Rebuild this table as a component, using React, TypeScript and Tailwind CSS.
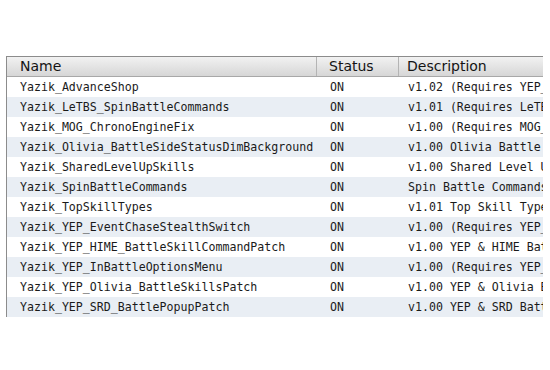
const rows = [
  ["Yazik_AdvanceShop", "ON", "v1.02 (Requires YEP_ShopMenuCore)"],
  ["Yazik_LeTBS_SpinBattleCommands", "ON", "v1.01 (Requires LeTBS)"],
  ["Yazik_MOG_ChronoEngineFix", "ON", "v1.00 (Requires MOG_ChronoEngine)"],
  ["Yazik_Olivia_BattleSideStatusDimBackground", "ON", "v1.00 Olivia Battle Side Status"],
  ["Yazik_SharedLevelUpSkills", "ON", "v1.00 Shared Level Up Skills"],
  ["Yazik_SpinBattleCommands", "ON", "Spin Battle Commands"],
  ["Yazik_TopSkillTypes", "ON", "v1.01 Top Skill Types"],
  ["Yazik_YEP_EventChaseStealthSwitch", "ON", "v1.00 (Requires YEP_EventChase)"],
  ["Yazik_YEP_HIME_BattleSkillCommandPatch", "ON", "v1.00 YEP & HIME Battle Skill"],
  ["Yazik_YEP_InBattleOptionsMenu", "ON", "v1.00 (Requires YEP_OptionsCore)"],
  ["Yazik_YEP_Olivia_BattleSkillsPatch", "ON", "v1.00 YEP & Olivia Battle Skills"],
  ["Yazik_YEP_SRD_BattlePopupPatch", "ON", "v1.00 YEP & SRD Battle Popup"],
];

const mono = "font-['DejaVu_Sans_Mono','Liberation_Mono',monospace] text-[11.6px] text-[#1a1a1a]";

export default function App() {
  return (
    <div className="w-[550px] h-[370px] bg-white overflow-hidden">
      <div className="ml-[6px] mt-[56px] w-[537px] overflow-hidden border-l border-t border-[#8c8c8c]">
        {/* header */}
        <div className="flex h-[20px] bg-gradient-to-b from-[#f2f2f2] to-[#d6d6d6] border-b border-[#a8a8a8] font-['DejaVu_Sans','Verdana',sans-serif] text-[14px] leading-[19px] text-[#141414]">
          <div className="w-[310px] shrink-0 pl-[13px] border-r border-[#b4b4b4]">Name</div>
          <div className="w-[82px] shrink-0 pl-[12px] border-r border-[#b4b4b4]">Status</div>
          <div className="flex-1 pl-[8px] whitespace-nowrap">Description</div>
        </div>
        {rows.map((r, i) => (
          <div
            key={r[0]}
            className={`flex h-[20px] leading-[20px] whitespace-nowrap ${mono} ${i % 2 ? "bg-[#e9eef4]" : "bg-white"}`}
          >
            <div className="w-[311px] shrink-0 pl-[13px] overflow-hidden">{r[0]}</div>
            <div className="w-[82px] shrink-0 pl-[12px]">{r[1]}</div>
            <div className="flex-1 pl-[8px] overflow-hidden">{r[2]}</div>
          </div>
        ))}
      </div>
    </div>
  );
}
